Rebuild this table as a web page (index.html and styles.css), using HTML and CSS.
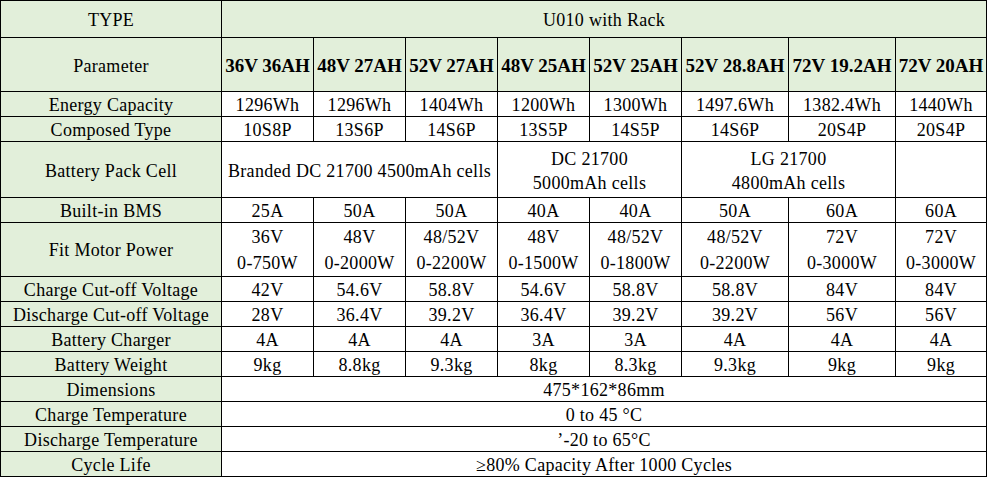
FILE: index.html
```html
<!DOCTYPE html>
<html lang="en">
<head>
    <meta charset="UTF-8">
    <meta name="viewport" content="width=device-width, initial-scale=1.0">
    <title>U010 with Rack - Battery Parameters</title>
    <link rel="stylesheet" href="styles.css">
</head>
<body>
    <table class="spec-table">
        <colgroup>
            <col class="col-label">
            <col class="col-std">
            <col class="col-std">
            <col class="col-std">
            <col class="col-std">
            <col class="col-std">
            <col class="col-wide">
            <col class="col-wide">
            <col class="col-last">
        </colgroup>
        <tbody>
            <tr class="row-type">
                <td class="label">TYPE</td>
                <td class="head" colspan="8">U010 with Rack</td>
            </tr>
            <tr class="row-param">
                <td class="label">Parameter</td>
                <td class="head model">36V 36AH</td>
                <td class="head model">48V 27AH</td>
                <td class="head model">52V 27AH</td>
                <td class="head model">48V 25AH</td>
                <td class="head model">52V 25AH</td>
                <td class="head model">52V 28.8AH</td>
                <td class="head model">72V 19.2AH</td>
                <td class="head model">72V 20AH</td>
            </tr>
            <tr>
                <td class="label">Energy Capacity</td>
                <td>1296Wh</td>
                <td>1296Wh</td>
                <td>1404Wh</td>
                <td>1200Wh</td>
                <td>1300Wh</td>
                <td>1497.6Wh</td>
                <td>1382.4Wh</td>
                <td>1440Wh</td>
            </tr>
            <tr>
                <td class="label">Composed Type</td>
                <td>10S8P</td>
                <td>13S6P</td>
                <td>14S6P</td>
                <td>13S5P</td>
                <td>14S5P</td>
                <td>14S6P</td>
                <td>20S4P</td>
                <td>20S4P</td>
            </tr>
            <tr class="row-cell">
                <td class="label">Battery Pack Cell</td>
                <td colspan="3">Branded DC 21700 4500mAh cells</td>
                <td colspan="2">DC 21700<br>5000mAh cells</td>
                <td colspan="2">LG 21700<br>4800mAh cells</td>
                <td></td>
            </tr>
            <tr>
                <td class="label">Built-in BMS</td>
                <td>25A</td>
                <td>50A</td>
                <td>50A</td>
                <td>40A</td>
                <td>40A</td>
                <td>50A</td>
                <td>60A</td>
                <td>60A</td>
            </tr>
            <tr class="row-motor">
                <td class="label">Fit Motor Power</td>
                <td>36V<br>0-750W</td>
                <td>48V<br>0-2000W</td>
                <td>48/52V<br>0-2200W</td>
                <td>48V<br>0-1500W</td>
                <td>48/52V<br>0-1800W</td>
                <td>48/52V<br>0-2200W</td>
                <td>72V<br>0-3000W</td>
                <td>72V<br>0-3000W</td>
            </tr>
            <tr>
                <td class="label">Charge Cut-off Voltage</td>
                <td>42V</td>
                <td>54.6V</td>
                <td>58.8V</td>
                <td>54.6V</td>
                <td>58.8V</td>
                <td>58.8V</td>
                <td>84V</td>
                <td>84V</td>
            </tr>
            <tr>
                <td class="label">Discharge Cut-off Voltage</td>
                <td>28V</td>
                <td>36.4V</td>
                <td>39.2V</td>
                <td>36.4V</td>
                <td>39.2V</td>
                <td>39.2V</td>
                <td>56V</td>
                <td>56V</td>
            </tr>
            <tr>
                <td class="label">Battery Charger</td>
                <td>4A</td>
                <td>4A</td>
                <td>4A</td>
                <td>3A</td>
                <td>3A</td>
                <td>4A</td>
                <td>4A</td>
                <td>4A</td>
            </tr>
            <tr>
                <td class="label">Battery Weight</td>
                <td>9kg</td>
                <td>8.8kg</td>
                <td>9.3kg</td>
                <td>8kg</td>
                <td>8.3kg</td>
                <td>9.3kg</td>
                <td>9kg</td>
                <td>9kg</td>
            </tr>
            <tr>
                <td class="label">Dimensions</td>
                <td colspan="8">475*162*86mm</td>
            </tr>
            <tr>
                <td class="label">Charge Temperature</td>
                <td colspan="8">0 to 45 °C</td>
            </tr>
            <tr>
                <td class="label">Discharge Temperature</td>
                <td colspan="8">’-20 to 65°C</td>
            </tr>
            <tr>
                <td class="label">Cycle Life</td>
                <td colspan="8">≥80% Capacity After 1000 Cycles</td>
            </tr>
        </tbody>
    </table>
</body>
</html>
```

FILE: styles.css
```css
* {
    margin: 0;
    padding: 0;
    box-sizing: border-box;
}

:root {
    --green: #e2efda;
    --line: #000000;
    --text: #000000;
}

body {
    background-color: white;
    color: var(--text);
    font-family: 'Liberation Serif', 'Times New Roman', serif;
    font-size: 18px;
    letter-spacing: 0.3px;
}

.spec-table {
    width: 987px;
    table-layout: fixed;
    border-collapse: collapse;
    border: 1px solid var(--line);
}

.col-label { width: 221px; }
.col-std { width: 92px; }
.col-wide { width: 107px; }
.col-last { width: 91px; }

.spec-table td {
    border: 1px solid var(--line);
    text-align: center;
    vertical-align: middle;
    height: 25px;
    line-height: 20px;
    padding: 2px 0 0;
    white-space: nowrap;
}

.spec-table .label,
.spec-table .head {
    background-color: var(--green);
}

.model {
    font-weight: bold;
    font-size: 19px;
    letter-spacing: 0;
}

.row-type td {
    height: 37px;
}

.row-param td {
    height: 54px;
}

.row-motor td {
    height: 54px;
    line-height: 26px;
    padding: 1px 0 0;
}

.row-cell td {
    height: 56px;
    line-height: 24px;
}
```
